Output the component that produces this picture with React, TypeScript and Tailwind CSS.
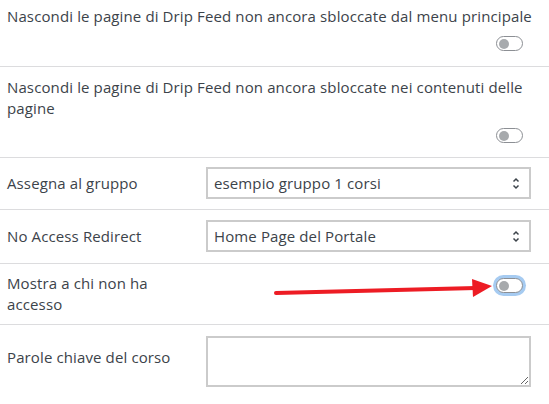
import React from 'react';

const Toggle = ({ focused = false }: { focused?: boolean }) => (
  <span
    className={
      'relative inline-block w-[27px] h-[15px] rounded-full border border-[#8c8f94] bg-white ' +
      (focused ? 'ring-[3px] ring-[#a6cbf1]' : '')
    }
  >
    <span className="absolute left-[2px] top-[1.5px] w-[10px] h-[10px] rounded-full bg-[#a7aaad]" />
  </span>
);

const SelectBox = ({ value }: { value: string }) => (
  <div className="flex items-center justify-between h-[32px] border-2 border-[#cbcbcb] bg-white pl-[6px] pr-[9px]">
    <span>{value}</span>
    <svg width="8" height="13" viewBox="0 0 8 13" fill="none" stroke="#3c434a" strokeWidth="1.5">
      <path d="M1.5 4.5 L4 2 L6.5 4.5" />
      <path d="M1.5 8.5 L4 11 L6.5 8.5" />
    </svg>
  </div>
);

export default function App() {
  return (
    <div
      className="relative w-[549px] h-[404px] overflow-hidden bg-white text-[15px] leading-[21px] tracking-[0.12px] text-[#3c434a]"
      style={{ fontFamily: '"Open Sans", "Liberation Sans", sans-serif' }}
    >
      {/* toggle rows */}
      <div className="flex flex-col pt-[6px] pb-[15px] border-b border-[#dcdcde] px-[7px]">
        <div>Nascondi le pagine di Drip Feed non ancora sbloccate dal menu principale</div>
        <div className="flex justify-end pr-[19px] mt-[9px]">
          <Toggle />
        </div>
      </div>
      <div className="flex flex-col pt-[10px] pb-[14px] border-b border-[#dcdcde] px-[7px]">
        <div className="pr-[10px]">
          Nascondi le pagine di Drip Feed non ancora sbloccate nei contenuti delle pagine
        </div>
        <div className="flex justify-end pr-[19px] mt-[9px]">
          <Toggle />
        </div>
      </div>

      {/* select rows */}
      <div className="flex items-center pt-[9px] pb-[10px] border-b border-[#dcdcde] pl-[7px] pr-[18px]">
        <div className="w-[199px] shrink-0">Assegna al gruppo</div>
        <div className="flex-1">
          <SelectBox value="esempio gruppo 1 corsi" />
        </div>
      </div>
      <div className="flex items-center pt-[10px] pb-[11px] border-b border-[#dcdcde] pl-[7px] pr-[18px]">
        <div className="w-[199px] shrink-0">No Access Redirect</div>
        <div className="flex-1">
          <SelectBox value="Home Page del Portale" />
        </div>
      </div>

      <div className="flex items-start pt-[9px] pb-[9px] border-b border-[#dcdcde] pl-[7px] pr-[26px]">
        <div className="w-[170px] shrink-0">Mostra a chi non ha accesso</div>
        <div className="flex-1 flex justify-end pt-[5px]">
          <Toggle focused />
        </div>
      </div>

      <div className="flex items-start pt-[11px] pl-[7px] pr-[18px]">
        <div className="w-[199px] shrink-0 pt-[11px]">Parole chiave del corso</div>
        <div className="flex-1">
          <textarea className="block w-full h-[51px] border-2 border-[#cbcbcb] bg-white outline-none" />
        </div>
      </div>

      {/* annotation arrow */}
      <svg className="absolute left-0 top-0 pointer-events-none" width="549" height="404">
        <line x1="276" y1="293" x2="476" y2="288" stroke="#ed1c24" strokeWidth="4" strokeLinecap="round" />
        <polygon points="472,279 492,286 473,297" fill="#ed1c24" />
      </svg>
    </div>
  );
}
